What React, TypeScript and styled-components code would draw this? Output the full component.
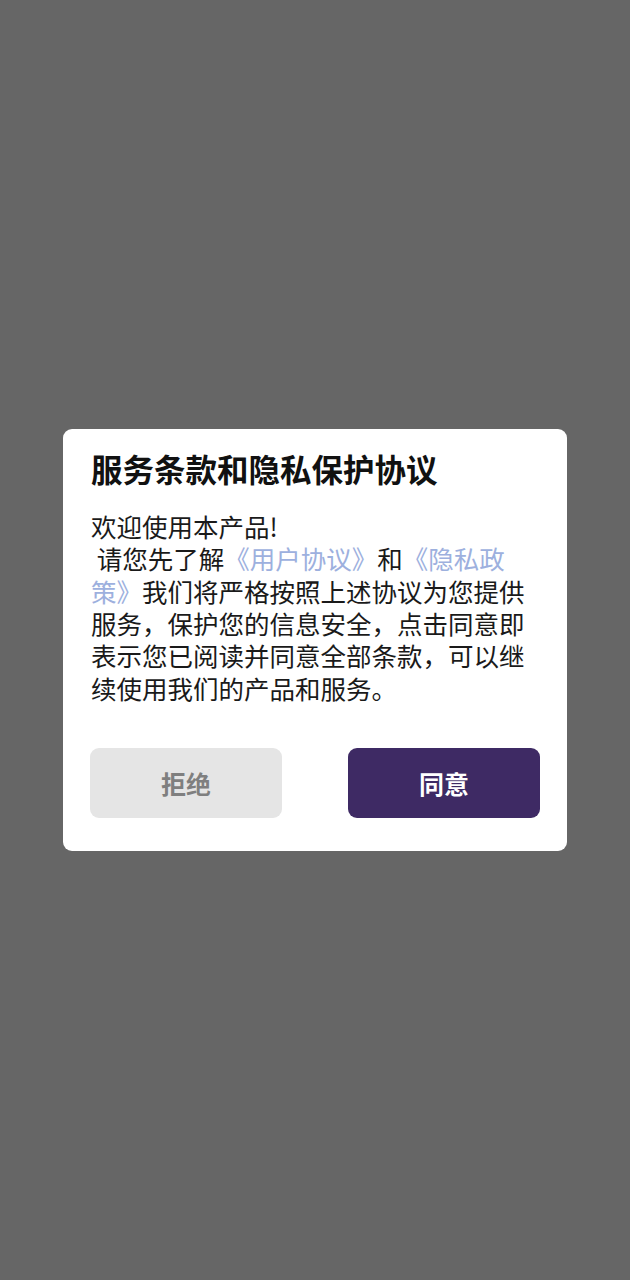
import styled, { createGlobalStyle } from "styled-components";

const GlobalStyle = createGlobalStyle`
  html, body {
    margin: 0;
    padding: 0;
    background: #666666;
  }
  body {
    font-family: "Noto Sans CJK SC", "Noto Sans", sans-serif;
  }
`;

export default function App() {
  return (
    <>
      <GlobalStyle />
      <Overlay>
        <Dialog>
          <Title>服务条款和隐私保护协议</Title>
          <Body>
            欢迎使用本产品!
            <br />
            &nbsp;请您先了解<Link>《用户协议》</Link>和<Link>《隐私政策》</Link>
            我们将严格按照上述协议为您提供服务，保护您的信息安全，点击同意即表示您已阅读并同意全部条款，可以继续使用我们的产品和服务。
          </Body>
          <Actions>
            <Button $primary={false}>拒绝</Button>
            <Button $primary>同意</Button>
          </Actions>
        </Dialog>
      </Overlay>
    </>
  );
}

const Overlay = styled.div`
  width: 630px;
  height: 1280px;
  display: flex;
  align-items: center;
  justify-content: center;
  background: #666666;
`;

const Dialog = styled.div`
  width: 504px;
  box-sizing: border-box;
  padding: 19px 28px 33px;
  background: #ffffff;
  border-radius: 9px;
  display: flex;
  flex-direction: column;
`;

const Title = styled.h1`
  margin: 0;
  font-size: 31.5px;
  line-height: 40px;
  font-weight: 700;
  color: #111111;
`;

const Body = styled.p`
  margin: 22px 0 0;
  font-size: 25.5px;
  line-height: 32.3px;
  color: #1a1a1a;
  word-break: break-all;
`;

const Link = styled.span`
  color: #9db0de;
`;

const Actions = styled.div`
  margin: 44px -1px 0 -1px;
  display: flex;
  justify-content: space-between;
`;

const Button = styled.button<{ $primary: boolean }>`
  width: 192px;
  height: 70px;
  border: none;
  border-radius: 9px;
  font-family: inherit;
  font-size: 25px;
  font-weight: 700;
  background: ${(p) => (p.$primary ? "#3e2a64" : "#e5e5e5")};
  color: ${(p) => (p.$primary ? "#ffffff" : "#7f7f7f")};
`;
